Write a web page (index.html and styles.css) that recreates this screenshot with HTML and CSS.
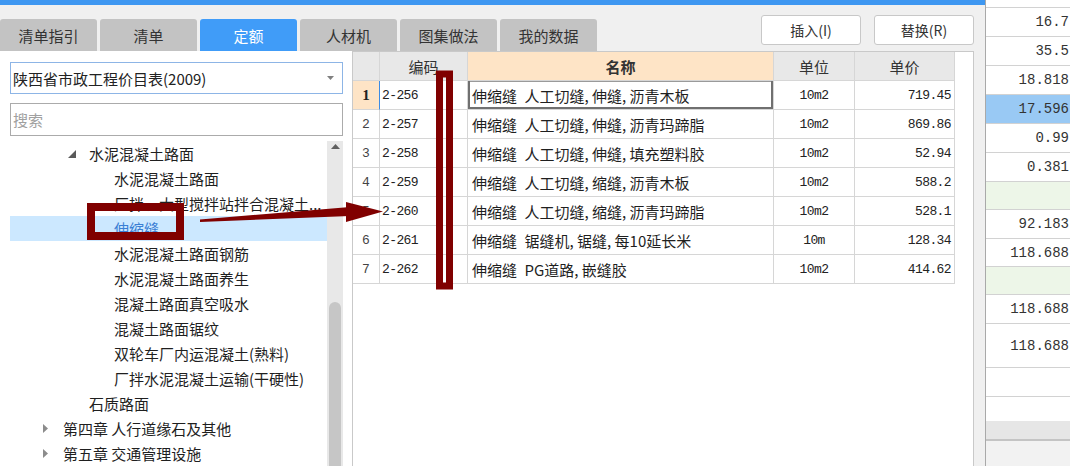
FILE: index.html
```html
<!DOCTYPE html>
<html lang="zh-CN">
<head>
<meta charset="utf-8">
<title>定额</title>
<link rel="stylesheet" href="styles.css">
</head>
<body>
<div class="dialog">
  <div class="titlebar"></div>
  <div class="toolbar">
    <div class="tabs">
      <div class="tab">清单指引</div>
      <div class="tab">清单</div>
      <div class="tab active">定额</div>
      <div class="tab">人材机</div>
      <div class="tab">图集做法</div>
      <div class="tab">我的数据</div>
    </div>
    <div class="actions">
      <button class="btn">插入(I)</button>
      <button class="btn">替换(R)</button>
    </div>
  </div>
  <div class="main">
    <div class="left">
      <div class="combo">
        <span>陕西省市政工程价目表(2009)</span>
        <svg class="caret" width="7" height="4" viewBox="0 0 7 4"><polygon points="0,0 7,0 3.5,4" fill="#808080"/></svg>
      </div>
      <div class="search">搜索</div>
      <div class="tree">
        <div class="tree-rows">
          <div class="node l2"><span class="tg"><svg width="8" height="8" viewBox="0 0 8 8"><polygon points="8,0 8,8 0,8" fill="#5a5a5a"/></svg></span>水泥混凝土路面</div>
          <div class="node l3">水泥混凝土路面</div>
          <div class="node l3">厂拌、大型搅拌站拌合混凝土...</div>
          <div class="node l3 sel">伸缩缝</div>
          <div class="node l3">水泥混凝土路面钢筋</div>
          <div class="node l3">水泥混凝土路面养生</div>
          <div class="node l3">混凝土路面真空吸水</div>
          <div class="node l3">混凝土路面锯纹</div>
          <div class="node l3">双轮车厂内运混凝土(熟料)</div>
          <div class="node l3">厂拌水泥混凝土运输(干硬性)</div>
          <div class="node l2 leaf">石质路面</div>
          <div class="node l1"><span class="tg"><svg width="6" height="9" viewBox="0 0 6 9"><polygon points="0,0 5,4.5 0,9" fill="#8c8c8c"/></svg></span>第四章 人行道缘石及其他</div>
          <div class="node l1"><span class="tg"><svg width="6" height="9" viewBox="0 0 6 9"><polygon points="0,0 5,4.5 0,9" fill="#8c8c8c"/></svg></span>第五章 交通管理设施</div>
        </div>
        <div class="vscroll">
          <svg class="up" width="9" height="5" viewBox="0 0 9 5"><polygon points="0,5 9,5 4.5,0" fill="#606060"/></svg>
          <div class="thumb"></div>
        </div>
      </div>
    </div>
    <div class="grid-panel">
      <div class="grid">
        <div class="c h"></div>
        <div class="c h">编码</div>
        <div class="c h hn">名称</div>
        <div class="c h">单位</div>
        <div class="c h">单价</div>

        <div class="c num cur">1</div>
        <div class="c code">2-256</div>
        <div class="c name selcell">伸缩缝&ensp;人工切缝, 伸缝, 沥青木板</div>
        <div class="c unit">10m2</div>
        <div class="c price">719.45</div>

        <div class="c num">2</div>
        <div class="c code">2-257</div>
        <div class="c name">伸缩缝&ensp;人工切缝, 伸缝, 沥青玛蹄脂</div>
        <div class="c unit">10m2</div>
        <div class="c price">869.86</div>

        <div class="c num">3</div>
        <div class="c code">2-258</div>
        <div class="c name">伸缩缝&ensp;人工切缝, 伸缝, 填充塑料胶</div>
        <div class="c unit">10m2</div>
        <div class="c price">52.94</div>

        <div class="c num">4</div>
        <div class="c code">2-259</div>
        <div class="c name">伸缩缝&ensp;人工切缝, 缩缝, 沥青木板</div>
        <div class="c unit">10m2</div>
        <div class="c price">588.2</div>

        <div class="c num">5</div>
        <div class="c code">2-260</div>
        <div class="c name">伸缩缝&ensp;人工切缝, 缩缝, 沥青玛蹄脂</div>
        <div class="c unit">10m2</div>
        <div class="c price">528.1</div>

        <div class="c num">6</div>
        <div class="c code">2-261</div>
        <div class="c name">伸缩缝&ensp;锯缝机, 锯缝, 每10延长米</div>
        <div class="c unit">10m</div>
        <div class="c price">128.34</div>

        <div class="c num">7</div>
        <div class="c code">2-262</div>
        <div class="c name">伸缩缝&ensp;PG道路, 嵌缝胶</div>
        <div class="c unit">10m2</div>
        <div class="c price">414.62</div>
      </div>
    </div>
  </div>
</div>
<div class="bgcol">
  <div class="v r8"></div>
  <div class="v">16.7</div>
  <div class="v">35.5</div>
  <div class="v">18.818</div>
  <div class="v hl">17.596</div>
  <div class="v">0.99</div>
  <div class="v">0.381</div>
  <div class="v r28 green"></div>
  <div class="v">92.183</div>
  <div class="v r28">118.688</div>
  <div class="v r28 green"></div>
  <div class="v">118.688</div>
  <div class="v r44">118.688</div>
  <div class="v"></div>
  <div class="v r24 noline"></div>
  <div class="band"></div>
  <div class="rest"></div>
</div>
<svg class="annot" width="1070" height="466" viewBox="0 0 1070 466">
  <rect x="91" y="207" width="89" height="29" fill="none" stroke="#800000" stroke-width="8"/>
  <rect x="439.5" y="74" width="10" height="212" fill="none" stroke="#800000" stroke-width="7"/>
  <polygon points="200,219.5 200,222 350,216 350,207" fill="#800000"/>
  <polygon points="346,202 383,211.5 346,222" fill="#800000"/>
</svg>
</body>
</html>
```

FILE: styles.css
```css
* { box-sizing: border-box; }
html, body { margin: 0; padding: 0; }
body {
  width: 1070px;
  height: 466px;
  overflow: hidden;
  display: flex;
  position: relative;
  background: #fff;
  font-family: "Noto Sans CJK SC", "Microsoft YaHei", sans-serif;
  font-size: 15px;
  color: #222;
}

.dialog {
  width: 985px;
  height: 466px;
  flex: none;
  display: flex;
  flex-direction: column;
  background: #f0f0f0;
}
.titlebar { height: 5px; flex: none; background: #3e97f1; }
.toolbar {
  height: 46px;
  flex: none;
  display: flex;
  justify-content: space-between;
  align-items: flex-start;
}
.tabs { display: flex; gap: 3px; align-self: flex-end; }
.tab {
  width: 97px;
  height: 32px;
  background: #c3c3c3;
  border-radius: 3px 3px 0 0;
  display: flex;
  align-items: center;
  justify-content: center;
  color: #333;
  font-size: 15px;
  line-height: 1;
}
.tab.active { background: #409cf8; color: #fff; }
.actions { display: flex; gap: 13px; margin-top: 10px; margin-right: 11px; }
.btn {
  width: 100px;
  height: 30px;
  padding: 0;
  background: #fff;
  border: 1px solid #c8c8c8;
  border-radius: 3px;
  font-family: inherit;
  font-size: 14px;
  color: #333;
}

.main { flex: 1; display: flex; min-height: 0; }

.left {
  width: 352px;
  flex: none;
  background: #fff;
  padding: 11px 9px 0 10px;
  display: flex;
  flex-direction: column;
}
.combo {
  height: 32px;
  flex: none;
  border: 1px solid #8db5e6;
  display: flex;
  align-items: center;
  justify-content: space-between;
  padding: 0 8px 0 2px;
  color: #222;
  line-height: 1;
}
.search {
  height: 33px;
  flex: none;
  margin-top: 9px;
  border: 1px solid #ababab;
  padding-left: 2px;
  color: #a0a0a0;
  display: flex;
  align-items: center;
  line-height: 1;
}
.tree { margin-top: 5px; flex: 1; display: flex; min-height: 0; overflow: hidden; }
.tree-rows { flex: 1; min-width: 0; }
.node {
  height: 25px;
  display: flex;
  align-items: center;
  white-space: nowrap;
  overflow: hidden;
  line-height: 1;
  color: #1f1f1f;
}
.node.l1 { padding-left: 33px; }
.node.l2 { padding-left: 58px; }
.node.l2.leaf { padding-left: 79px; }
.node.l3 { padding-left: 104px; }
.tg { width: 21px; flex: none; display: flex; align-items: center; }
.node.l1 .tg { width: 20px; }
.node.l2 .tg svg { margin-top: 1px; }
.node.sel { background: #cce8ff; color: #3b7fd4; }
.vscroll {
  width: 16px;
  flex: none;
  background: #e8e8e8;
  display: flex;
  flex-direction: column;
  align-items: center;
}
.vscroll .up { margin-top: 3px; flex: none; }
.vscroll .thumb {
  width: 12px;
  flex: 1;
  margin-top: 153px;
  background: #c6c6c6;
  border-radius: 6px 6px 0 0;
}

.grid-panel {
  width: 622px;
  flex: none;
  background: #fff;
  border: 1px solid #c9c9c9;
  border-bottom: none;
}
.grid {
  display: grid;
  grid-template-columns: 27px 88px 306px 81px 100px;
  grid-auto-rows: 29px;
  width: 602px;
}
.c {
  border-right: 1px solid #d6d6d6;
  border-bottom: 1px solid #d6d6d6;
  display: flex;
  align-items: center;
  white-space: nowrap;
  overflow: hidden;
  line-height: 1;
}
.h { background: #e8e8e8; justify-content: center; color: #333; font-size: 15px; }
.h.hn { background: #fee4c6; font-weight: bold; }
.num, .code, .unit, .price {
  font-family: "Liberation Mono", monospace;
  font-size: 13px;
  letter-spacing: -0.6px;
  color: #222;
}
.num { justify-content: center; color: #444; letter-spacing: 0; }
.num.cur {
  background: #fee4c6;
  border-right-color: #3c8ce6;
  font-family: "Liberation Serif", serif;
  font-weight: bold;
  font-size: 15px;
  color: #222;
}
.code { padding-left: 2px; }
.name { padding-left: 4px; font-size: 15px; color: #1f1f1f; }
.selcell { box-shadow: inset 2px 0 0 #707070, inset -2px -2px 0 #707070, inset 0 1px 0 #9a9a9a; }
.unit { justify-content: center; }
.price { justify-content: flex-end; padding-right: 3px; }

.bgcol {
  flex: 1;
  border-left: 1px solid #a9a9a9;
  background: #fff;
  display: flex;
  flex-direction: column;
  font-family: "Liberation Mono", monospace;
  font-size: 14px;
  color: #333;
}
.v {
  height: 29px;
  flex: none;
  border-bottom: 1px solid #d2d2d2;
  display: flex;
  align-items: center;
  justify-content: flex-end;
  padding-right: 1px;
  line-height: 1;
}
.v.r8 { height: 8px; }
.v.r28 { height: 28px; }
.v.r44 { height: 44px; }
.v.r24 { height: 24px; }
.v.noline { border-bottom: none; }
.v.hl { background: #99c9f4; }
.v.green { background: #edf6e8; }
.band { height: 18px; flex: none; background: #e6e6e6; border-bottom: 2px solid #c4c4c4; height: 20px; }
.rest { flex: 1; background: #f2f2f2; }

.annot {
  position: absolute;
  left: 0;
  top: 0;
  pointer-events: none;
}
```
